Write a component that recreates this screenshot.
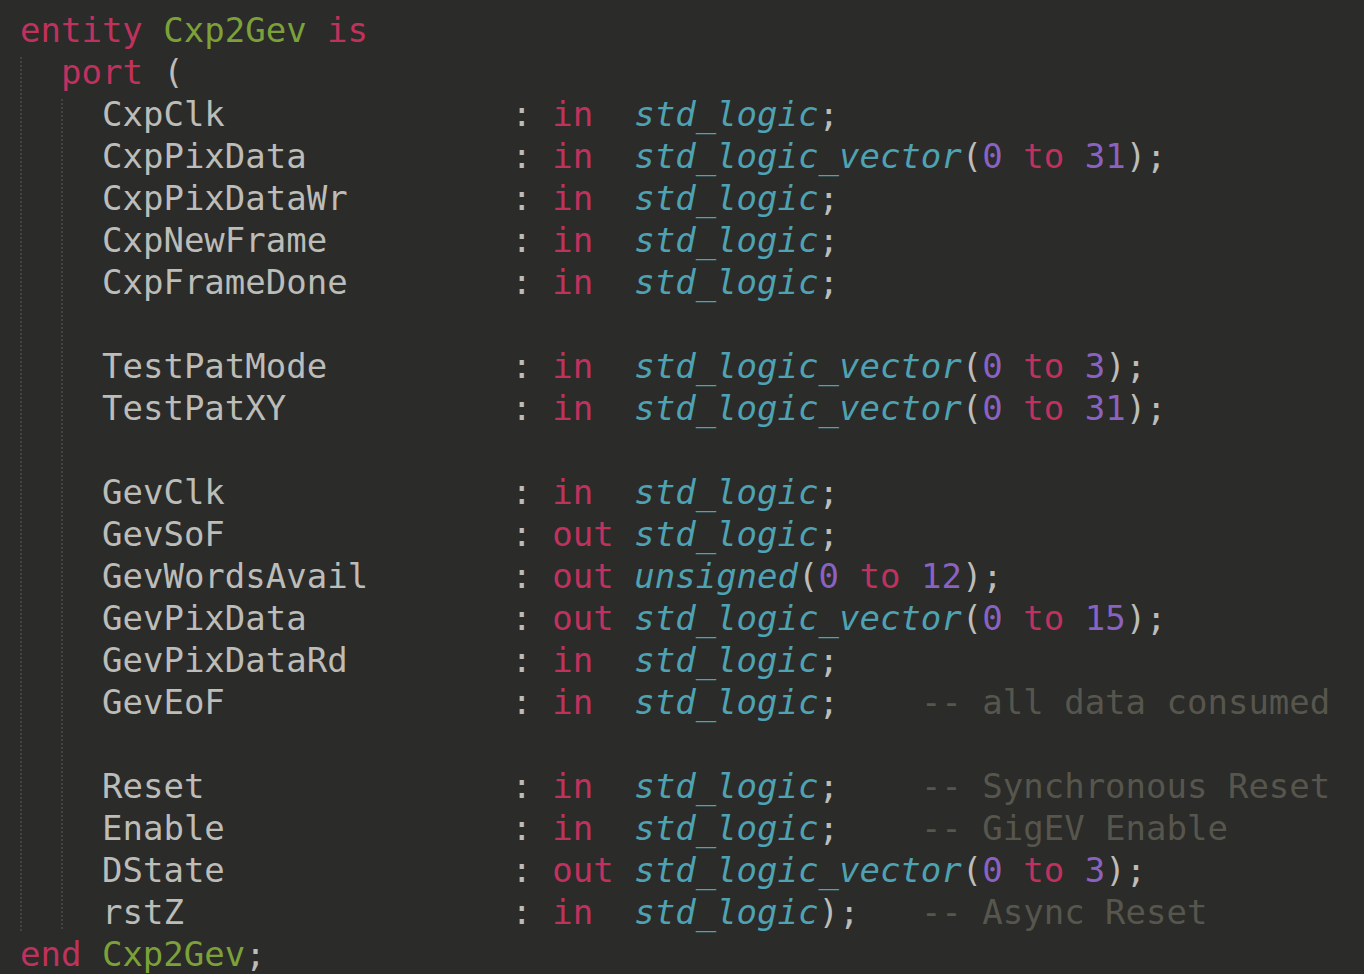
import React from "react";

const K = ({ children }) => <span className="text-[#c0325e]">{children}</span>;
const G = ({ children }) => <span className="text-[#7ca139]">{children}</span>;
const T = ({ children }) => <span className="italic text-[#4ea2b2]">{children}</span>;
const N = ({ children }) => <span className="text-[#8a62c2]">{children}</span>;
const C = ({ children }) => <span className="text-[#57564d]">{children}</span>;

const pad = (s, n) => s + " ".repeat(Math.max(0, n - s.length));

const ports = [
  ["CxpClk", "in", "sl"],
  ["CxpPixData", "in", "slv", "31"],
  ["CxpPixDataWr", "in", "sl"],
  ["CxpNewFrame", "in", "sl"],
  ["CxpFrameDone", "in", "sl"],
  null,
  ["TestPatMode", "in", "slv", "3"],
  ["TestPatXY", "in", "slv", "31"],
  null,
  ["GevClk", "in", "sl"],
  ["GevSoF", "out", "sl"],
  ["GevWordsAvail", "out", "uns", "12"],
  ["GevPixData", "out", "slv", "15"],
  ["GevPixDataRd", "in", "sl"],
  ["GevEoF", "in", "sl", null, "all data consumed"],
  null,
  ["Reset", "in", "sl", null, "Synchronous Reset"],
  ["Enable", "in", "sl", null, "GigEV Enable"],
  ["DState", "out", "slv", "3"],
  ["rstZ", "in", "slend", null, "Async Reset"],
];

function PortLine({ p }) {
  if (!p) return <div className="h-[42px]"> </div>;
  const [name, dir, type, hi, comment] = p;
  let typePart;
  if (type === "sl") {
    typePart = (
      <>
        <T>std_logic</T>;
      </>
    );
  } else if (type === "slend") {
    typePart = (
      <>
        <T>std_logic</T>);
      </>
    );
  } else {
    typePart = (
      <>
        <T>{type === "uns" ? "unsigned" : "std_logic_vector"}</T>(<N>0</N> <K>to</K> <N>{hi}</N>);
      </>
    );
  }
  const typeLen = type === "sl" ? 10 : type === "slend" ? 11 : 0;
  return (
    <div className="h-[42px]">
      {pad(name, 20)}: <K>{dir === "in" ? "in " : "out"}</K> {typePart}
      {comment ? (
        <>
          {" ".repeat(14 - typeLen)}
          <C>-- {comment}</C>
        </>
      ) : null}
    </div>
  );
}

const Guide = () => (
  <div className="absolute left-0 top-[6px] bottom-[2px] w-[2px] bg-[repeating-linear-gradient(to_bottom,#434341_0px,#434341_2px,transparent_2px,transparent_4px)]" />
);

export default function App() {
  return (
    <div
      className="w-[1364px] h-[974px] overflow-hidden bg-[#2b2b2a] text-[#bcbcb8] text-[34px] leading-[42px] whitespace-pre pt-[9px] pl-[20px]"
      style={{ fontFamily: '"DejaVu Sans Mono", monospace' }}
    >
      <div className="h-[42px]">
        <K>entity</K> <G>Cxp2Gev</G> <K>is</K>
      </div>
      <div className="relative pl-[41px]">
        <Guide />
        <div className="h-[42px]">
          <K>port</K> (
        </div>
        <div className="relative pl-[41px]">
          <Guide />
          {ports.map((p, i) => (
            <PortLine key={i} p={p} />
          ))}
        </div>
      </div>
      <div className="h-[42px]">
        <K>end</K> <G>Cxp2Gev</G>;
      </div>
    </div>
  );
}
